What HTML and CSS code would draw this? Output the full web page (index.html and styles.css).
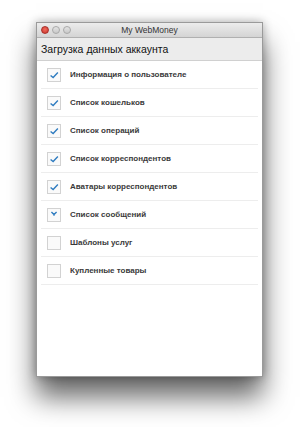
FILE: index.html
```html
<!DOCTYPE html>
<html lang="ru">
<head>
    <meta charset="UTF-8">
    <title>My WebMoney</title>
    <link rel="stylesheet" href="styles.css">
</head>
<body>
    <div class="window">
        <div class="titlebar">
            <span class="btn close"></span>
            <span class="btn"></span>
            <span class="btn"></span>
            <span class="title">My WebMoney</span>
        </div>
        <div class="header">Загрузка данных аккаунта</div>
        <ul class="list">
            <li class="done"><span class="box"><svg viewBox="0 0 14 14"><path d="M3 7.5 L6 10 L11.5 4"/></svg></span>Информация о пользователе</li>
            <li class="done"><span class="box"><svg viewBox="0 0 14 14"><path d="M3 7.5 L6 10 L11.5 4"/></svg></span>Список кошельков</li>
            <li class="done"><span class="box"><svg viewBox="0 0 14 14"><path d="M3 7.5 L6 10 L11.5 4"/></svg></span>Список операций</li>
            <li class="done"><span class="box"><svg viewBox="0 0 14 14"><path d="M3 7.5 L6 10 L11.5 4"/></svg></span>Список корреспондентов</li>
            <li class="done"><span class="box"><svg viewBox="0 0 14 14"><path d="M3 7.5 L6 10 L11.5 4"/></svg></span>Аватары корреспондентов</li>
            <li class="done"><span class="box"><svg viewBox="0 0 14 14"><path d="M4 3.5 L7 6.5 L10 3.5 M7 6.5 L7 8"/></svg></span>Список сообщений</li>
            <li><span class="box"></span>Шаблоны услуг</li>
            <li><span class="box"></span>Купленные товары</li>
        </ul>
    </div>
</body>
</html>
```

FILE: styles.css
```css
*{
    margin: 0;
    padding: 0;
    box-sizing: border-box;
}
html, body{
    height: 427px;
    overflow: hidden;
}
body{
    background: #fff;
    font-family: "Liberation Sans", Arial, sans-serif;
    padding: 22px 37px 0 36px;
}
.window{
    width: 227px;
    height: 355px;
    background: #fff;
    border: 1px solid #9a9a9a;
    box-shadow: 0 20px 26px rgba(0,0,0,0.6), 0 0 9px rgba(0,0,0,0.3);
}
.titlebar{
    height: 15px;
    display: flex;
    align-items: center;
    padding-left: 4px;
    gap: 3px;
    background: linear-gradient(#ececec, #d4d4d4);
    border-bottom: 1px solid #b0b0b0;
    position: relative;
}
.btn{
    width: 8px;
    height: 8px;
    border-radius: 50%;
    background: linear-gradient(#e4e4e4, #c8c8c8);
    border: 1px solid #a8a8a8;
}
.btn.close{
    background: radial-gradient(circle at 50% 40%, #f26b5e, #c8332a);
    border-color: #a8302a;
}
.title{
    position: absolute;
    left: 0;
    right: 0;
    text-align: center;
    font-size: 8.5px;
    color: #333;
}
.header{
    height: 23px;
    line-height: 22px;
    padding-left: 4px;
    font-size: 10.5px;
    color: #111;
    background: #ececec;
    border-bottom: 1px solid #d0d0d0;
}
.list{
    list-style: none;
    padding: 0 4px;
}
.list li{
    height: 28px;
    display: flex;
    align-items: center;
    gap: 9px;
    padding-left: 6px;
    border-bottom: 1px solid #ededed;
    font-size: 8px;
    font-weight: bold;
    color: #3a3a3a;
}
.box{
    width: 14px;
    height: 14px;
    border: 1px solid #d2d2d2;
    background: #fafafa;
    display: flex;
}
.box svg{
    width: 12px;
    height: 12px;
    fill: none;
    stroke: #2f7cc0;
    stroke-width: 1.6;
}
```
